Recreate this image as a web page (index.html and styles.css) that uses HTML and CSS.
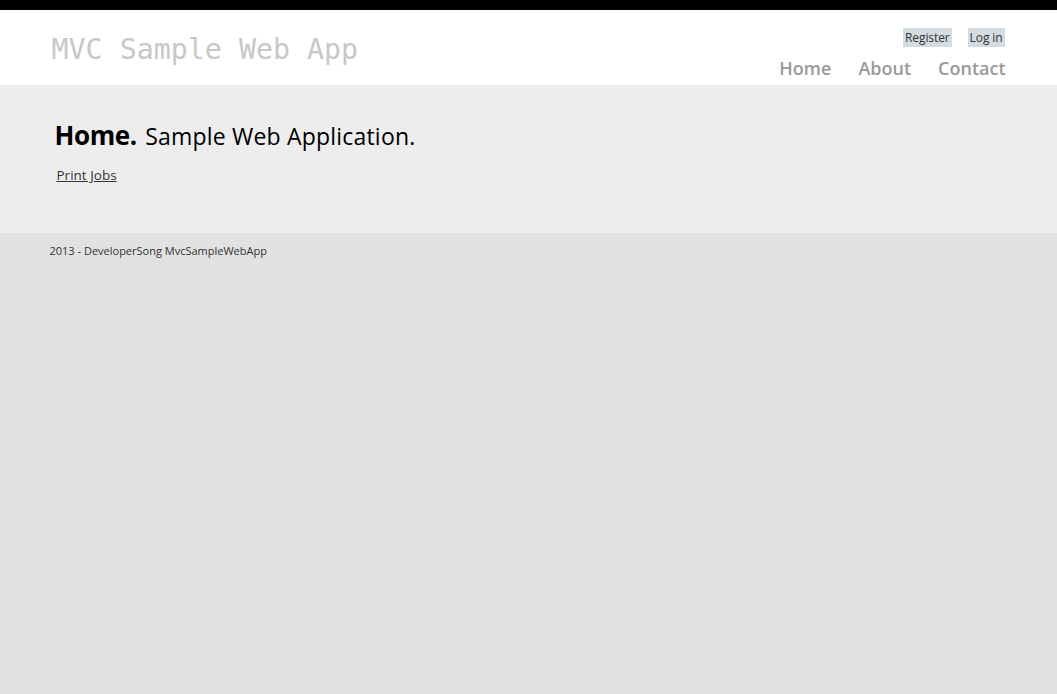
FILE: index.html
```html
<!DOCTYPE html>
<html>
<head>
<meta charset="utf-8">
<title>MVC Sample Web App</title>
<link rel="stylesheet" href="styles.css">
</head>
<body>
<header class="site-header">
  <div class="wrap header-row">
    <p class="site-title">MVC Sample Web App</p>
    <div class="header-right">
      <ul class="login-links">
        <li><a href="#">Register</a></li>
        <li><a href="#">Log in</a></li>
      </ul>
      <nav>
        <ul class="menu">
          <li><a href="#">Home</a></li>
          <li><a href="#">About</a></li>
          <li><a href="#">Contact</a></li>
        </ul>
      </nav>
    </div>
  </div>
</header>
<main class="featured">
  <div class="wrap content">
    <h1 class="page-title"><span class="strong">Home.</span> <span class="sub">Sample Web Application.</span></h1>
    <a class="link" href="#">Print Jobs</a>
  </div>
</main>
<footer class="site-footer">
  <div class="wrap">
    <p>2013 - DeveloperSong MvcSampleWebApp</p>
  </div>
</footer>
</body>
</html>
```
FILE: styles.css
```css
html, body {
  margin: 0;
  padding: 0;
}
body {
  background: #e2e2e2;
  border-top: 10px solid #000;
  font-family: "Open Sans", "Noto Sans", sans-serif;
  color: #333;
}
.wrap {
  width: 960px;
  margin: 0 auto;
}
.site-header {
  background: #fff;
  height: 75px;
}
.header-row {
  display: flex;
  justify-content: space-between;
  height: 75px;
}
.site-title {
  margin: 0;
  padding: 23px 0 0 3px;
  font-family: "DejaVu Sans Mono", "Liberation Mono", monospace;
  font-size: 28.3px;
  line-height: 33px;
  color: #c8c8c8;
}
.header-right {
  display: flex;
  flex-direction: column;
  align-items: flex-end;
  padding-top: 18px;
  margin-right: 3px;
}
.login-links {
  list-style: none;
  margin: 0 1px 0 0;
  padding: 0;
  display: flex;
  gap: 16px;
}
.login-links a {
  display: block;
  background: #d3dce0;
  color: #333;
  text-decoration: none;
  font-size: 12px;
  line-height: 19px;
  padding: 0 2px;
  letter-spacing: -0.1px;
}
.menu {
  list-style: none;
  margin: 10px 0 0;
  padding: 0;
  display: flex;
  gap: 27px;
}
.menu a {
  color: #999;
  text-decoration: none;
  font-size: 18px;
  font-weight: 600;
  line-height: 23px;
}
.featured {
  background: #ededed;
  height: 148px;
}
.content {
  padding: 31px 0 0 6px;
  box-sizing: border-box;
}
.page-title {
  margin: 0;
  font-weight: normal;
  line-height: 34px;
  color: #000;
}
.page-title .strong {
  font-weight: 700;
  font-size: 26px;
  letter-spacing: -0.4px;
}
.page-title .sub {
  font-size: 23px;
  letter-spacing: 0.2px;
}
.link {
  display: inline-block;
  margin: 13px 0 0 2px;
  font-size: 13.5px;
  color: #333;
}
.site-footer p {
  margin: 0;
  padding: 10px 0 0 1px;
  font-size: 11px;
  line-height: 16px;
  color: #333;
}
```
